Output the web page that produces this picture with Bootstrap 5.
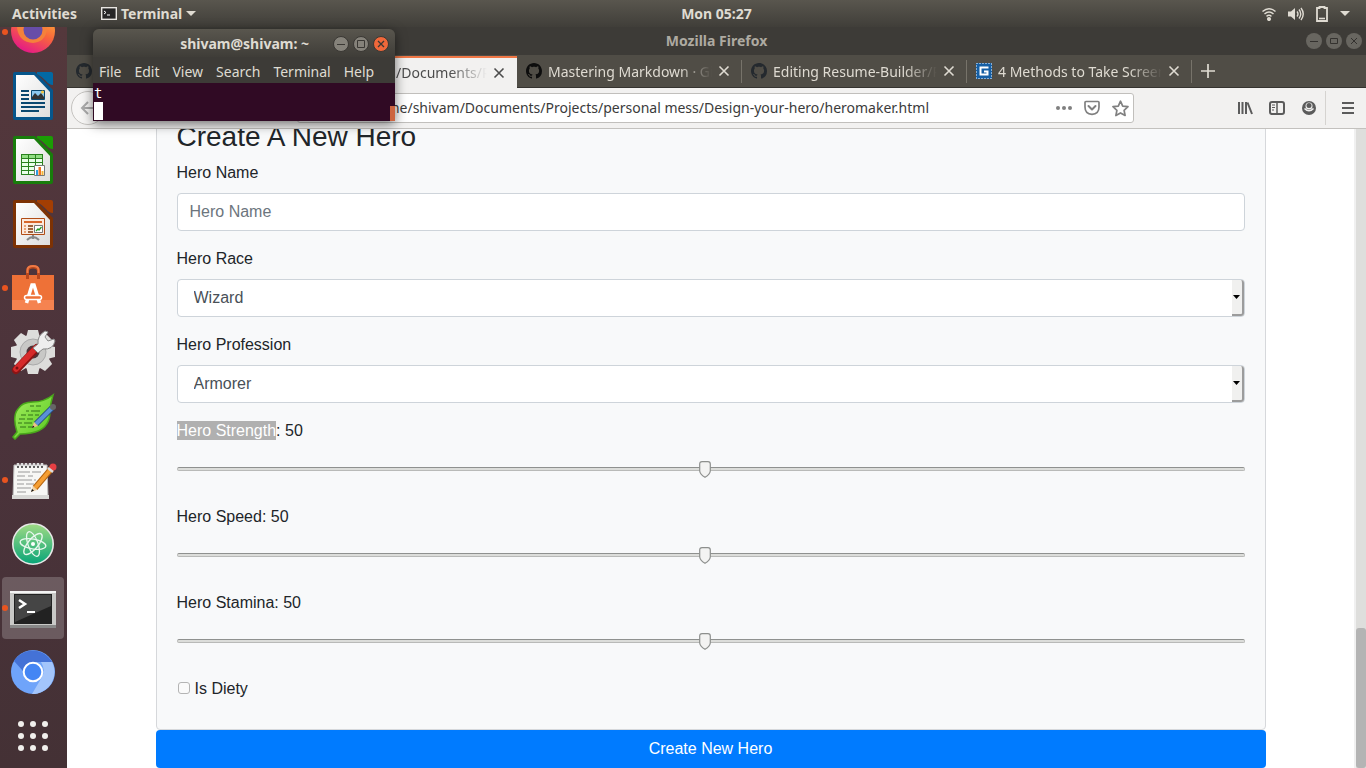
<!DOCTYPE html>
<html lang="en">
<head>
<meta charset="utf-8">
<meta name="viewport" content="width=device-width, initial-scale=1">
<title>Mozilla Firefox</title>
<link href="https://cdn.jsdelivr.net/npm/bootstrap@5.3.0/dist/css/bootstrap.min.css" rel="stylesheet">
<style>
  body { font-family: "Noto Sans", "Open Sans", sans-serif; font-size: 14px; line-height: 20px; color: #212529; }
  button { font: inherit; color: inherit; }
  svg { display: block; flex: none; }
  .plain-btn { background: none; border: 0; padding: 0; }

  /* Desktop shell */
  .top-panel { height: 27px; background: linear-gradient(#59564e, #403e39); color: #dfdbd2; font-weight: 700; display: grid; grid-template-columns: 1fr auto 1fr; }
  .clock { margin-left: 67px; }
  .dock { width: 67px; background: linear-gradient(#54383c, #4b333b 55%, #443135); }
  .dock-item { width: 66px; height: 64px; flex: none; position: relative; display: flex; align-items: center; justify-content: center; }
  .dock-item.running::before { content: ""; position: absolute; z-index: 1; left: 2px; top: 29px; width: 6px; height: 6px; border-radius: 50%; background: #e95420; }
  .dock-item.current::after { content: ""; position: absolute; inset: 1px 2px; border-radius: 4px; background: rgba(255,255,255,.2); }
  .dock-item svg { position: relative; z-index: 1; }

  /* Browser window */
  .title-strip { height: 28px; background: #3d3b37; color: #aeaaa1; font-weight: 700; display: grid; grid-template-columns: 1fr auto 1fr; }
  .tab-strip { height: 33px; background: #504d46; color: #dfdbd2; border-bottom: 1px solid #35332f; }
  .tab-item { width: 225px; padding: 0 12px 0 9px; gap: 6px; position: relative; }
  .tab-item::after { content: ""; position: absolute; right: 0; top: 5px; bottom: 4px; width: 1px; background: #77736a; }
  .tab-item.selected { background: #f2f1f0; color: #4c4c4c; border-top: 2px solid #f07746; margin: 1px 0 -1px; height: 32px; }
  .tab-item.selected::after { display: none; }
  .tab-title { flex: 1; overflow: hidden; white-space: nowrap; padding-top: 2px; -webkit-mask-image: linear-gradient(90deg, #000 80%, transparent); mask-image: linear-gradient(90deg, #000 80%, transparent); }
  .tab-item.selected .tab-title { padding-top: 0; }
  .tool-row { height: 41px; background: #f2f1f0; border-bottom: 1px solid #c3c1be; color: #5b5b5b; }
  .back-btn { width: 34px; height: 34px; border: 1px solid #c5c3c0; border-radius: 50%; background: #f7f6f5; }
  .url-box { height: 30px; margin-left: 192px; margin-right: 103px; border: 1px solid #c1bfbc; border-radius: 3px; background: #fff; color: #808080; }
  .url-box input { border: 0; outline: 0; padding: 0; margin-left: 32px; color: #3b3b3b; min-width: 0; background: none; }
  .menu-sep { width: 1px; height: 34px; background: #d5d3d0; }

  /* Web page */
  .page-view { font-family: "Liberation Sans", Arial, sans-serif; font-size: 16px; line-height: 24px; }
  .page-body { max-width: 1110px; }
  .hero-card { background: #f8f9fa; border: 1px solid #d6d8db; border-radius: 4px; padding: 20px; }
  .hero-card h3 { font-size: 28px; line-height: 32px; font-weight: 400; margin-bottom: 8px; }
  .hero-card label { display: block; }
  .field { margin-bottom: 16px; }
  .field .form-control { height: 38px; margin-top: 8px; border-color: #ced4da; border-radius: 4px; color: #495057; }
  .field select.form-control { padding-left: 16px; }
  .field .form-control::placeholder { color: #6c757d; }
  .drop-mark { position: absolute; right: 1px; bottom: 1px; width: 12px; height: 36px; background: #f0f0ef; border-right: 2px solid #9c9c9c; border-bottom: 2px solid #9c9c9c; border-radius: 0 3px 3px 0; pointer-events: none; display: flex; align-items: center; justify-content: center; }
  .marked { background: #b0b0b0; color: #fff; display: inline-block; line-height: 19px; }
  .slide { -webkit-appearance: none; appearance: none; display: block; width: 100%; height: 36px; margin: 8px 0 18px; background: none; }
  .slide::-webkit-slider-runnable-track { height: 4px; border-radius: 2px; background: #dcddda; border: 1px solid #b9bab8; border-top-color: #8f918f; }
  .slide::-webkit-slider-thumb { -webkit-appearance: none; width: 12px; height: 17px; margin-top: -7px; border: 0; background: url("data:image/svg+xml,%3Csvg xmlns='http://www.w3.org/2000/svg' viewBox='0 0 12 17'%3E%3Cpath d='M3 .7H9Q11.3.7 11.3 3V10Q11 13.500 6 16.200 1 13.500 .7 10V3Q.7.7 3 .7Z' fill='%23f3f3f2' stroke='%238d8f8d' stroke-width='1.200'/%3E%3C/svg%3E") center / 100% 100% no-repeat; }
  .tick { -webkit-appearance: none; appearance: none; width: 12px; height: 12px; margin: 0 5px 3px 1px; border: 1px solid #b4b4b4; border-radius: 3px; background: #fafafa; }
  .btn-hero { height: 38px; background: #007bff; color: #fff; border: 0; border-radius: 4px; padding: 0; }
  .scroll-rail { width: 12px; background: #dededc; border-left: 2px solid #f0f0f0; }
  .scroll-grip { height: 140px; background: #b4b4b4; border-radius: 3px; }

  /* Floating terminal window */
  .term { position: absolute; left: 93px; top: 29px; width: 302px; border-radius: 6px 6px 0 0; overflow: hidden; color: #dfdbd2; }
  .term-shadow { position: absolute; left: 93px; top: 29px; width: 302px; height: 92px; border-radius: 6px 6px 0 0; box-shadow: 0 3px 12px rgba(0,0,0,.55); }
  .term-title { height: 28px; padding: 2px 6px 0; background: linear-gradient(#59564e, #3f3d38); font-weight: 700; }
  .term-menu { height: 26px; padding: 4px 6px 0; gap: 13px; background: #3d3b37; }
  .term-screen { height: 38px; background: #300a24; color: #fff; font-family: "DejaVu Sans Mono", monospace; padding: 2px 1px; line-height: 17px; position: relative; }
  .term-screen::after { content: ""; position: absolute; right: 0; bottom: 0; width: 5px; height: 15px; background: #cc6540; }
  .caret-block { width: 9px; height: 18px; background: #fff; }
</style>
</head>
<body class="vh-100 overflow-hidden d-flex flex-column position-relative">

<!-- shared glyphs -->
<svg width="0" height="0" class="position-absolute" aria-hidden="true">
  <defs>
    <symbol id="octocat" viewBox="0 0 16 16"><path d="M8 0C3.580 0 0 3.580 0 8c0 3.540 2.290 6.530 5.470 7.590.4.070.550-.170.550-.380 0-.190-.010-.820-.010-1.490-2.010.370-2.530-.490-2.690-.940-.090-.230-.480-.940-.820-1.130-.280-.150-.680-.520-.010-.530.630-.010 1.080.580 1.230.820.720 1.210 1.870.870 2.330.660.070-.520.280-.870.510-1.070-1.780-.200-3.640-.890-3.640-3.950 0-.870.310-1.590.820-2.150-.080-.200-.360-1.020.080-2.120 0 0 .670-.210 2.200.820.640-.180 1.320-.270 2-.270s1.360.090 2 .270c1.530-1.040 2.200-.820 2.200-.820.440 1.100.160 1.920.080 2.120.510.560.820 1.270.820 2.150 0 3.070-1.870 3.750-3.650 3.950.290.250.540.730.540 1.480 0 1.070-.010 1.930-.010 2.200 0 .210.150.460.550.380A8.010 8.010 0 0 0 16 8c0-4.420-3.580-8-8-8z" fill="currentColor"/></symbol>
    <symbol id="cross" viewBox="0 0 12 12"><path d="M1.500 1.500l9 9M10.500 1.500l-9 9" stroke="currentColor" stroke-width="1.600" fill="none"/></symbol>
    <linearGradient id="paper" x2="1" y2="1"><stop offset="0" stop-color="#fff"/><stop offset="1" stop-color="#ddd"/></linearGradient>
  </defs>
</svg>

<header class="top-panel align-items-center flex-shrink-0">
  <div class="d-flex align-items-center ps-2 ms-1">
    <button class="plain-btn">Activities</button>
    <button class="plain-btn d-flex align-items-center ms-3 ps-2">
      <svg width="16" height="13" viewBox="0 0 16 13"><rect x=".7" y=".7" width="14.600" height="11.600" fill="#262626" stroke="#e8e6e2" stroke-width="1.400"/><path d="M3 4l2 1.500L3 7M6 8h3" stroke="#fff" fill="none"/></svg>
      <span class="mx-1">Terminal</span>
      <svg width="10" height="5" viewBox="0 0 10 5"><path d="M0 0h10L5 5z" fill="#dfdbd2"/></svg>
    </button>
  </div>
  <div class="clock">Mon 05:27</div>
  <div class="d-flex align-items-center justify-content-end pe-3">
    <svg width="14" height="14" viewBox="0 0 14 14" fill="none" stroke="#dfdbd2" stroke-width="1.500"><path d="M.5 4.500Q7-1 13.500 4.500M2.500 7Q7 3 11.500 7M4.500 9.300Q7 7.300 9.500 9.300"/><circle cx="7" cy="12" r="1.300" fill="#dfdbd2"/></svg>
    <svg class="me-2 ms-2 ps-0" width="20" height="14" viewBox="-4 0 20 14"><path d="M0 4.500h3L7 1v12L3 9.500H0z" fill="#dfdbd2"/><path d="M9 4.500q2 2.500 0 5M11 2.500q3.500 4.500 0 9M13 1q4.500 6 0 12" fill="none" stroke="#dfdbd2" stroke-width="1.400"/></svg>
    <svg class="ms-1 me-2" width="12" height="16" viewBox="0 0 12 16"><path d="M3.500 2V1h5v1H11v13H1V2z" fill="none" stroke="#dfdbd2" stroke-width="1.800"/><path d="M3 12.500h6" stroke="#dfdbd2" stroke-width="1.600"/></svg>
    <svg class="ms-1" width="10" height="5" viewBox="0 0 10 5"><path d="M0 0h10L5 5z" fill="#dfdbd2"/></svg>
  </div>
</header>

<div class="d-flex flex-fill overflow-hidden">
  <nav class="dock d-flex flex-column justify-content-end overflow-hidden flex-shrink-0" aria-label="Dock">
    <button class="plain-btn dock-item running" aria-label="Firefox"><svg width="48" height="48" viewBox="0 0 48 48"><defs><linearGradient id="fx" x1=".8" y1="0" x2=".3" y2="1"><stop offset="0" stop-color="#ffbd33"/><stop offset=".5" stop-color="#f9663c"/><stop offset="1" stop-color="#e3158b"/></linearGradient></defs><circle cx="24" cy="23" r="22" fill="url(#fx)"/><path d="M8 20Q12 8 26 10q10 1 12 12-2 12-14 13Q10 34 8 20z" fill="#f5813b"/><circle cx="24" cy="22" r="9.500" fill="#674da8"/><path d="M13 16q6-6 11-2-5 1-4 5-4 0-7-3z" fill="#f8792f"/></svg></button>
    <button class="plain-btn dock-item" aria-label="Writer"><svg width="48" height="48" viewBox="0 0 48 48"><path d="M6 0h20l18 18v28q0 2-2 2H6q-2 0-2-2V2q0-2 2-2z" fill="#06568c"/><path d="M28 0h14q2 0 2 2v11q-4 0-7-4-5-5-9-7z" fill="#0369a3"/><path d="M7 3h18l16 17v25H7z" fill="url(#paper)"/><path d="M12 19h8M12 23h8M12 27h8M12 31h24M12 35h24M12 39h18" stroke="#0a4870" stroke-width="2"/><path d="M22.500 18.500h13v9h-13z" fill="#8cc8ee" stroke="#0a4870"/><path d="M23 27v-2l3-4 3 3 3-3 3 4v2z" fill="#333"/><circle cx="33.500" cy="20" r="1.500" fill="#f7c33c"/></svg></button>
    <button class="plain-btn dock-item" aria-label="Calc"><svg width="48" height="48" viewBox="0 0 48 48"><path d="M6 0h20l18 18v28q0 2-2 2H6q-2 0-2-2V2q0-2 2-2z" fill="#187d0b"/><path d="M28 0h14q2 0 2 2v11q-4 0-7-4-5-5-9-7z" fill="#1b9d05"/><path d="M7 3h18l16 17v25H7z" fill="url(#paper)"/><path d="M12 18h22v21H12z" fill="#2a811f"/><path d="M13 19h6v3h-6zm7 0h6v3h-6zm7 0h6v3h-6z" fill="#91de83"/><path d="M13 23h6v3h-6zm7 0h6v3h-6zm7 0h6v3h-6zM13 27h6v3h-6zm7 0h6v3h-6zm7 0h6v3h-6zM13 31h6v3h-6zm7 0h6v3h-6zM13 35h6v3h-6zm7 0h6v3h-6z" fill="#eaffea"/><path d="M25.500 29.500h10v10h-10z" fill="#fff" stroke="#777"/><path d="M27 34h2v5h-2z" fill="#2b9de1"/><path d="M29.500 31h2.500v8h-2.500z" fill="#ee7321"/><path d="M32.500 35h2v4h-2z" fill="#f3b63a"/></svg></button>
    <button class="plain-btn dock-item" aria-label="Impress"><svg width="48" height="48" viewBox="0 0 48 48"><path d="M6 0h20l18 18v28q0 2-2 2H6q-2 0-2-2V2q0-2 2-2z" fill="#7d3204"/><path d="M28 0h14q2 0 2 2v11q-4 0-7-4-5-5-9-7z" fill="#a33e03"/><path d="M7 3h18l16 17v25H7z" fill="url(#paper)"/><path d="M18 40q6-6 12 0M24 35v4" stroke="#888" stroke-width="2" fill="none"/><path d="M12.500 18.500h23v16h-23z" fill="#fbe9dd" stroke="#b04c16"/><path d="M15 22h18" stroke="#d8652a" stroke-width="2"/><path d="M15 26h2M15 29h2M15 32h2" stroke="#e58a55" stroke-width="1.500"/><path d="M19 26h5M19 29h5M19 32h5" stroke="#813405" stroke-width="1.500"/><path d="M25.500 25.500h8v7h-8z" fill="#fff" stroke="#777"/><path d="M27 31l2-2 1 1 2.500-3" stroke="#259a27" fill="none" stroke-width="1.300"/></svg></button>
    <button class="plain-btn dock-item running" aria-label="Software"><svg width="48" height="48" viewBox="0 0 48 48"><path d="M3 11h42v35H3z" fill="#ee7137"/><path d="M3 36h42v10H3z" fill="#f58350"/><path d="M18.500 15V7q0-4 5.500-4t5.500 4v8" fill="none" stroke="#b9481d" stroke-width="3"/><path d="M18.500 9V6q0-4 5.500-4t5.500 4v3" fill="none" stroke="#f07a45" stroke-width="2"/><path d="M17.500 39l5.500-18h2l5.500 18" fill="none" stroke="#fff" stroke-width="3.500"/><rect x="15.500" y="31.500" width="17" height="4" rx="2" fill="#ee7137" stroke="#fff" stroke-width="1.500"/></svg></button>
    <button class="plain-btn dock-item" aria-label="Settings"><svg width="48" height="48" viewBox="0 0 48 48"><g fill="#dddddb"><circle cx="24" cy="24" r="17.500"/><path id="tooth" d="M19 2h10l2 8H17z"/><use href="#tooth" transform="rotate(45 24 24)"/><use href="#tooth" transform="rotate(90 24 24)"/><use href="#tooth" transform="rotate(135 24 24)"/><use href="#tooth" transform="rotate(180 24 24)"/><use href="#tooth" transform="rotate(225 24 24)"/><use href="#tooth" transform="rotate(270 24 24)"/><use href="#tooth" transform="rotate(315 24 24)"/></g><circle cx="24" cy="24" r="13" fill="#c8c8c6" stroke="#aaa"/><circle cx="24" cy="24" r="6.500" fill="#4b363b"/><path d="M7 42L28 20" stroke="#8c1515" stroke-width="8" stroke-linecap="round"/><path d="M7 41L27 20" stroke="#d62a2a" stroke-width="5.500" stroke-linecap="round"/><path d="M29 16q-1-8 7-13l3 1-3 5 3 4 6-2 1 2q-2 9-12 8l-5 4-5-5z" fill="#eee" stroke="#888"/><circle cx="8" cy="40" r="1.500" fill="#7b1010"/></svg></button>
    <button class="plain-btn dock-item" aria-label="Leaf editor"><svg width="48" height="48" viewBox="0 0 48 48"><defs><linearGradient id="leaf" x2="1" y2="1"><stop offset="0" stop-color="#a6ef60"/><stop offset="1" stop-color="#55c71e"/></linearGradient></defs><path d="M4 45l4-5Q3 24 9 17 13 10 24 10q11 0 20-7-3 9-3 18-1 17-19 20-6 1-11 1l-5 5z" fill="url(#leaf)" stroke="#4aa81b" stroke-width="1.500"/><path d="M21 14h4m2 0h5M17 19h3m2 0h9M12 23h5m2 0h5m2 0h4M10 27h6m2 0h6M9 31h4m2 0h8M11 35h6m2 0h5" stroke="#337319" stroke-width="1"/><path d="M27 32L43 16" stroke="#254a7c" stroke-width="6"/><path d="M27 32L43 16" stroke="#5a91d6" stroke-width="4"/><path d="M23 36l2-6 4 4z" fill="#edc28a"/><path d="M23 36l1-2.500 1.500 1.500z" fill="#111"/><circle cx="44" cy="15" r="3" fill="#666"/></svg></button>
    <button class="plain-btn dock-item running" aria-label="Text editor"><svg width="48" height="48" viewBox="0 0 48 48"><path d="M5 9h33l1 32H4z" fill="#f7f7f5" stroke="#bbb"/><path d="M3 39h37v4H3z" fill="#d8d8d6"/><path d="M9 11V7m4 4V7m4 4V7m4 4V7m4 4V7m4 4V7m4 4V7" stroke="#ddd" stroke-width="2.500"/><path d="M9 12v-2m4 2v-2m4 2v-2m4 2v-2m4 2v-2m4 2v-2m4 2v-2" stroke="#333" stroke-width="1.500"/><path d="M9 16h12m2 0h9M8 20h8m3 0h5M8 24h15m2 0h2M8 28h7m2 0h8M8 32h14M8 36h9" stroke="#999"/><path d="M26 32L43 12" stroke="#b66510" stroke-width="6"/><path d="M26 32L43 12" stroke="#f59e32" stroke-width="4"/><path d="M22 36l2-6 4 4z" fill="#f1d1a2"/><path d="M22 36l1-3 2 1.500z" fill="#111"/><circle cx="44" cy="11" r="3.500" fill="#e63f43"/><path d="M39 12l5 4" stroke="#ddd" stroke-width="2.500"/></svg></button>
    <button class="plain-btn dock-item" aria-label="Atom"><svg width="48" height="48" viewBox="0 0 48 48"><defs><linearGradient id="atom" x2="0" y2="1"><stop offset="0" stop-color="#9fda84"/><stop offset="1" stop-color="#08a578"/></linearGradient></defs><circle cx="24" cy="24" r="20.200" fill="url(#atom)" stroke="#e8e8e8" stroke-width="1.600"/><g fill="none" stroke="#e9f7ee" stroke-width="1.300"><ellipse cx="24" cy="24" rx="13" ry="5" transform="rotate(10 24 24)"/><ellipse cx="24" cy="24" rx="13" ry="5" transform="rotate(70 24 24)"/><ellipse cx="24" cy="24" rx="13" ry="5" transform="rotate(130 24 24)"/></g><circle cx="24" cy="24" r="2" fill="#fff"/></svg></button>
    <button class="plain-btn dock-item running current" aria-label="Terminal"><svg width="48" height="48" viewBox="0 0 48 48"><path d="M1 7h46v36H1z" fill="#c9c9c7"/><path d="M1 7h46v2H1z" fill="#f4f4f4"/><path d="M1 41h46v3H1z" fill="#888"/><path d="M5 10h38v30H5z" fill="#222"/><path d="M6 11h36v11L6 38z" fill="#454545"/><path d="M10 16l6 4-6 4" fill="none" stroke="#fff" stroke-width="2.500"/><path d="M18 28h8" stroke="#fff" stroke-width="2"/></svg></button>
    <button class="plain-btn dock-item" aria-label="Chromium"><svg width="48" height="48" viewBox="0 0 48 48"><circle cx="24" cy="24" r="22" fill="#6fa4fa"/><path d="M5 13A22 22 0 0 1 43 14H24q-8 0-10 9z" fill="#4472d6"/><path d="M43 14A22 22 0 0 1 23 46L33 29q4-7-1-15z" fill="#a3c5fb"/><circle cx="24" cy="24" r="9.300" fill="#4486f4" stroke="#fff" stroke-width="2"/></svg></button>
    <button class="plain-btn dock-item" aria-label="Show applications"><svg width="48" height="48" viewBox="0 0 48 48"><g fill="#f1efec"><circle cx="12" cy="12" r="3"/><circle cx="24" cy="12" r="3"/><circle cx="36" cy="12" r="3"/><circle cx="12" cy="24" r="3"/><circle cx="24" cy="24" r="3"/><circle cx="36" cy="24" r="3"/><circle cx="12" cy="36" r="3"/><circle cx="24" cy="36" r="3"/><circle cx="36" cy="36" r="3"/></g></svg></button>
  </nav>

  <main class="d-flex flex-column flex-fill overflow-hidden bg-white">
    <div class="title-strip align-items-center flex-shrink-0">
      <div></div>
      <div>Mozilla Firefox</div>
      <div class="d-flex justify-content-end gap-1 pe-1">
        <button class="plain-btn" aria-label="Minimize"><svg width="16" height="16" viewBox="0 0 16 16" fill="none" stroke="#34322f"><circle cx="8" cy="8" r="8" fill="#686660" stroke="none"/><path d="M4 8.500h8"/></svg></button>
        <button class="plain-btn" aria-label="Maximize"><svg width="16" height="16" viewBox="0 0 16 16" fill="none" stroke="#34322f"><circle cx="8" cy="8" r="8" fill="#686660" stroke="none"/><path d="M4.500 5.500h7v5h-7z"/></svg></button>
        <button class="plain-btn" aria-label="Close"><svg width="16" height="16" viewBox="0 0 16 16" fill="none" stroke="#34322f"><circle cx="8" cy="8" r="8" fill="#686660" stroke="none"/><path d="M5 5l6 6M11 5l-6 6"/></svg></button>
      </div>
    </div>

    <div class="tab-strip d-flex flex-shrink-0">
      <div class="tab-item d-flex align-items-center"><svg width="16" height="16" color="#24292e"><use href="#octocat"/></svg></div>
      <div class="tab-item selected d-flex align-items-center">
        <span class="tab-title ps-5">shivam/Documents/Pro</span>
        <button class="plain-btn" aria-label="Close tab"><svg width="12" height="12"><use href="#cross"/></svg></button>
      </div>
      <div class="tab-item d-flex align-items-center">
        <svg width="16" height="16" color="#0d0d0d"><use href="#octocat"/></svg>
        <span class="tab-title">Mastering Markdown · GitHub</span>
        <button class="plain-btn" aria-label="Close tab"><svg width="12" height="12"><use href="#cross"/></svg></button>
      </div>
      <div class="tab-item d-flex align-items-center">
        <svg width="16" height="16" color="#24292e"><use href="#octocat"/></svg>
        <span class="tab-title">Editing Resume-Builder/README</span>
        <button class="plain-btn" aria-label="Close tab"><svg width="12" height="12"><use href="#cross"/></svg></button>
      </div>
      <div class="tab-item d-flex align-items-center">
        <svg width="16" height="16" viewBox="0 0 16 16"><path d="M0 0h16v16H0z" fill="#155fa5"/><path d="M.5.5h15v15H.5z" fill="none" stroke="#fff" stroke-dasharray="1 2"/><path d="M12.500 4.500h-8v7h7V8.500H8" fill="none" stroke="#fff" stroke-width="2"/></svg>
        <span class="tab-title">4 Methods to Take Screenshots</span>
        <button class="plain-btn" aria-label="Close tab"><svg width="12" height="12"><use href="#cross"/></svg></button>
      </div>
      <button class="plain-btn ms-2" aria-label="New tab"><svg width="16" height="16" viewBox="0 0 16 16"><path d="M8 1v14M1 8h14" stroke="#dfdbd2" stroke-width="1.700"/></svg></button>
    </div>

    <div class="tool-row d-flex align-items-center flex-shrink-0 px-1">
      <button class="plain-btn back-btn d-flex align-items-center justify-content-center" aria-label="Back"><svg width="16" height="16" viewBox="0 0 16 16" fill="none" stroke="#aaa" stroke-width="2"><path d="M15 8H2M8 2L2 8l6 6"/></svg></button>
      <div class="url-box d-flex align-items-center flex-fill pe-1">
        <input class="flex-fill" type="text" aria-label="Address" value="file:///home/shivam/Documents/Projects/personal mess/Design-your-hero/heromaker.html">
        <button class="plain-btn" aria-label="Page actions"><svg width="16" height="16" viewBox="0 0 16 16" fill="currentColor"><circle cx="2" cy="8" r="2"/><circle cx="8" cy="8" r="2"/><circle cx="14" cy="8" r="2"/></svg></button>
        <button class="plain-btn ms-2 me-2 ps-1" aria-label="Save to Pocket"><svg width="16" height="16" viewBox="0 0 16 16" fill="none" stroke="currentColor" stroke-width="1.700" stroke-linecap="round" stroke-linejoin="round"><path d="M2 1.500h12q1 0 1 1V7q0 7-7 7.300Q1 14 1 7V2.500q0-1 1-1z"/><path d="M4.500 6L8 9.500 11.500 6" stroke-width="2"/></svg></button>
        <button class="plain-btn ms-1" aria-label="Bookmark"><svg width="17" height="17" viewBox="0 0 17 17" fill="none" stroke="currentColor" stroke-width="1.700" stroke-linejoin="round"><path d="M8.500 1.200l2.200 4.900 5.300.6-3.900 3.600 1 5.200-4.600-2.600-4.600 2.600 1-5.200L1 6.700l5.300-.6z"/></svg></button>
      </div>
      <div class="d-flex align-items-center gap-3">
        <button class="plain-btn" aria-label="Library"><svg width="16" height="16" viewBox="0 0 16 16" stroke="currentColor" stroke-width="2" fill="none"><path d="M2 2v12M5.500 2v12M9 2v12M10.500 2.500L15 14"/></svg></button>
        <button class="plain-btn" aria-label="Sidebar"><svg width="16" height="16" viewBox="0 0 16 16" stroke="currentColor" fill="none"><rect x="1" y="2" width="14" height="12" rx="2" stroke-width="2"/><path d="M8 2v12" stroke-width="1.500"/><path d="M3 5h3M3 7.500h3M3 10h2"/></svg></button>
        <button class="plain-btn" aria-label="Account"><svg width="16" height="16" viewBox="0 0 16 16"><circle cx="8" cy="8" r="7" fill="currentColor"/><circle cx="8" cy="6" r="3.500" fill="#f2f1f0"/><circle cx="8" cy="5.500" r="2.500" fill="currentColor"/><path d="M3.500 8.500q4.500 4.500 9 0" fill="none" stroke="#f2f1f0" stroke-width="1.500"/></svg></button>
      </div>
      <div class="menu-sep ms-2 me-3"></div>
      <button class="plain-btn me-2" aria-label="Menu"><svg width="12" height="14" viewBox="0 0 12 14"><path d="M0 2h12M0 7h12M0 12h12" stroke="currentColor" stroke-width="1.800"/></svg></button>
    </div>

    <div class="page-view d-flex flex-fill overflow-hidden">
      <div class="flex-fill d-flex flex-column justify-content-end overflow-hidden">
        <form class="page-body w-100 mx-auto" onsubmit="return false">
          <div class="hero-card">
            <h3>Create A New Hero</h3>
            <div class="field"><label for="heroName">Hero Name</label><input id="heroName" class="form-control" type="text" placeholder="Hero Name"></div>
            <div class="field position-relative"><label for="race">Hero Race</label><select id="race" class="form-control"><option>Wizard</option></select>
              <span class="drop-mark"><svg width="7" height="4" viewBox="0 0 7 4"><path d="M0 0h7L3.500 4z"/></svg></span></div>
            <div class="field position-relative"><label for="prof">Hero Profession</label><select id="prof" class="form-control"><option>Armorer</option></select>
              <span class="drop-mark"><svg width="7" height="4" viewBox="0 0 7 4"><path d="M0 0h7L3.500 4z"/></svg></span></div>
            <label for="strength"><span class="marked">Hero Strength</span>: 50</label><input id="strength" class="slide" type="range" min="1" max="100" value="50">
            <label for="speed">Hero Speed: 50</label><input id="speed" class="slide" type="range" min="1" max="100" value="50">
            <label for="stamina">Hero Stamina: 50</label><input id="stamina" class="slide" type="range" min="1" max="100" value="50">
            <div class="d-flex align-items-center mb-2"><input id="diety" class="tick" type="checkbox"><label for="diety">Is Diety</label></div>
          </div>
          <button class="btn-hero w-100 d-block">Create New Hero</button>
        </form>
      </div>
      <div class="scroll-rail d-flex flex-column justify-content-end"><div class="scroll-grip"></div></div>
    </div>
  </main>
</div>

<div class="term-shadow"></div>
<section class="term" aria-label="Terminal">
  <div class="term-title d-flex align-items-center">
    <div class="flex-fill text-end pe-4">shivam@shivam: ~</div>
    <div class="d-flex gap-1">
      <button class="plain-btn" aria-label="Minimize"><svg width="16" height="16" viewBox="0 0 16 16" fill="none" stroke="#3a3834"><circle cx="8" cy="8" r="7.500" fill="#85827a"/><path d="M4 8.500h8"/></svg></button>
      <button class="plain-btn" aria-label="Maximize"><svg width="16" height="16" viewBox="0 0 16 16" fill="none" stroke="#3a3834"><circle cx="8" cy="8" r="7.500" fill="#85827a"/><path d="M4.500 4.500h7v7h-7z"/></svg></button>
      <button class="plain-btn" aria-label="Close"><svg width="16" height="16" viewBox="0 0 16 16" fill="none" stroke="#3a3834"><circle cx="8" cy="8" r="7.500" fill="#f1683a"/><path d="M5 5l6 6M11 5l-6 6" stroke-width="1.300"/></svg></button>
    </div>
  </div>
  <div class="term-menu d-flex align-items-center">
    <button class="plain-btn">File</button><button class="plain-btn">Edit</button><button class="plain-btn">View</button><button class="plain-btn">Search</button><button class="plain-btn">Terminal</button><button class="plain-btn">Help</button>
  </div>
  <div class="term-screen"><div>t</div><div class="caret-block"></div></div>
</section>

<script src="https://cdn.jsdelivr.net/npm/bootstrap@5.3.0/dist/js/bootstrap.bundle.min.js"></script>
</body>
</html>
